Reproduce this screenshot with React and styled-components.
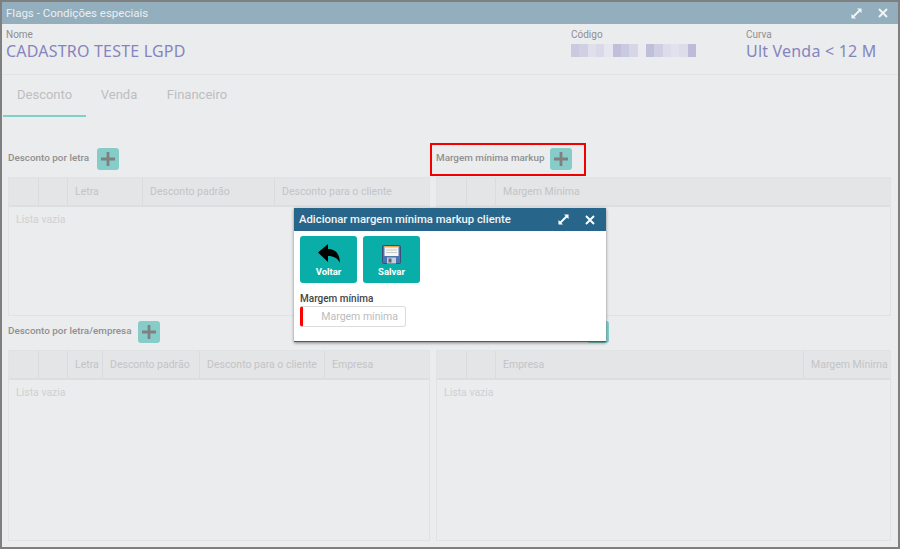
import React from 'react';
import styled, { createGlobalStyle } from 'styled-components';

const GlobalStyle = createGlobalStyle`
  html, body {
    margin: 0;
    padding: 0;
    width: 900px;
    height: 549px;
    overflow: hidden;
    background: #ebecee;
    font-family: Roboto, "Liberation Sans", sans-serif;
  }
  * { box-sizing: border-box; }
`;

const Page = styled.div`
  position: relative;
  width: 900px;
  height: 549px;
  border: 2px solid #7f7f7f;
  background: #ebecee;
  display: flex;
  flex-direction: column;
`;

const TitleBar = styled.div`
  height: 22px;
  flex: none;
  padding: 0 10px 0 4px;
  display: flex;
  align-items: center;
  justify-content: space-between;
  background: #93aebc;
  color: #ebeff2;
  font-size: 11.5px;
`;

const WindowActions = styled.div`
  display: flex;
  align-items: center;
  gap: ${({ $gap }) => $gap}px;
`;

const ClientInfo = styled.div`
  height: 51px;
  flex: none;
  padding: 5px 0 0 4px;
  border-bottom: 1px solid #e2e3e5;
  display: grid;
  grid-template-columns: 565px 175px 1fr;
`;

const FieldLabel = styled.div`
  font-size: 10px;
  line-height: 12px;
  color: #8f8f8f;
`;

const FieldValue = styled.div`
  font-family: "Noto Sans", sans-serif;
  font-size: 16px;
  line-height: 20px;
  letter-spacing: 0.2px;
  color: #8585bd;
  white-space: nowrap;
`;

const Mosaic = styled.div`
  display: flex;
  width: 125px;
  height: 13px;
  margin-top: 3px;
`;

const MosaicCell = styled.span`
  flex: 1;
  background: ${({ $tone }) => $tone};
`;

const TabRow = styled.div`
  height: 42px;
  flex: none;
  margin-left: 1px;
  display: flex;
  font-size: 13px;
  color: #bdbec0;
`;

const Tab = styled.div`
  padding: 12px 14px 0;
  width: ${({ $width }) => $width}px;
  text-align: center;
  white-space: nowrap;
  border-bottom: ${({ $active }) => ($active ? '2px solid #7fcfca' : 'none')};
`;

const Sections = styled.div`
  flex: 1;
  padding: 31px 7px 6px 6px;
  display: grid;
  grid-template-columns: 422px 455px;
  column-gap: 6px;
  row-gap: 5px;
  grid-template-rows: 168px 1fr;
`;

const Section = styled.section`
  display: flex;
  flex-direction: column;
  min-height: 0;
`;

const SectionHead = styled.div`
  height: 29px;
  flex: none;
  display: flex;
  align-items: flex-start;
  gap: ${({ $gap }) => $gap}px;
`;

const SectionTitle = styled.span`
  margin-top: 4px;
  font-size: 9.9px;
  font-weight: 500;
  line-height: 12px;
  color: #8f8f8f;
  white-space: nowrap;
`;

const AddButton = styled.div`
  width: 22px;
  height: 22px;
  border-radius: 3px;
  background: #86cdca;
  display: flex;
  align-items: center;
  justify-content: center;
`;

const Table = styled.div`
  flex: 1;
  border: 1px solid #e1e2e4;
  display: flex;
  flex-direction: column;
`;

const HeadRow = styled.div`
  height: 29px;
  flex: none;
  background: #e4e5e7;
  border-bottom: 2px solid #dddee0;
  display: grid;
  grid-template-columns: ${({ $cols }) => $cols};
`;

const HeadCell = styled.div`
  padding: 0 7px;
  border-right: 1px solid #dadbdd;
  font-size: 10.5px;
  line-height: 27px;
  color: #c3c4c6;
  white-space: nowrap;
  &:last-child { border-right: none; }
`;

const EmptyText = styled.div`
  padding: 6px 7px;
  font-size: 10.5px;
  line-height: 14px;
  color: #cfd0d2;
`;

// Red marker around the section heading
const Highlight = styled.div`
  position: absolute;
  left: 428px;
  top: 141px;
  width: 156px;
  height: 33px;
  border: 2px solid #f00000;
`;

const Dialog = styled.div`
  position: absolute;
  left: 292px;
  top: 206px;
  width: 312px;
  height: 134px;
  background: #fff;
  box-shadow: 0 1px 3px rgba(0, 0, 0, 0.45);
  border-bottom: 1px solid #2a6583;
`;

const DialogBar = styled.div`
  height: 23px;
  padding: 0 11px 0 5px;
  display: flex;
  align-items: center;
  justify-content: space-between;
  background: #27668a;
  color: #f2f5f7;
  font-size: 11.3px;
  font-weight: 500;
`;

const DialogBody = styled.div`
  padding: 5px 6px 0;
`;

const ButtonRow = styled.div`
  display: flex;
  gap: 6px;
`;

const ActionButton = styled.div`
  width: 57px;
  height: 47px;
  border-radius: 3px;
  background: #0aaea8;
  color: #fff;
  font-size: 9.5px;
  font-weight: 700;
  display: flex;
  flex-direction: column;
  align-items: center;
  padding-top: 8px;
`;

const ButtonIcon = styled.div`
  height: 20px;
  display: flex;
  align-items: center;
  justify-content: center;
  margin-bottom: 2px;
`;

const InputLabel = styled.div`
  margin-top: 10px;
  font-size: 10px;
  font-weight: 500;
  line-height: 12px;
  color: #444;
`;

const InputBox = styled.div`
  margin-top: 1px;
  width: 106px;
  height: 21px;
  border: 1px solid #dcdcdc;
  border-left: 3px solid #ff0000;
  border-radius: 3px;
  padding-right: 7px;
  text-align: right;
  font-size: 10.5px;
  line-height: 19px;
  color: #bcbcbc;
`;

const ExpandIcon = ({ color, size }) => (
  <svg width={size} height={size} viewBox="0 0 12 12" fill={color}>
    <path d="M6.5 0.5H11.5V5.5L9.7 3.7 3.7 9.7 5.5 11.5H0.5V6.5L2.3 8.3 8.3 2.3z" />
  </svg>
);

const CloseIcon = ({ color, size }) => (
  <svg width={size} height={size} viewBox="0 0 10 10" stroke={color} strokeWidth="1.9" fill="none">
    <path d="M1 1l8 8M9 1l-8 8" />
  </svg>
);

const PlusIcon = () => (
  <svg width="14" height="14" viewBox="0 0 14 14" fill="#808080">
    <path d="M5.6 0h2.8v5.6H14v2.8H8.4V14H5.6V8.4H0V5.6h5.6z" />
  </svg>
);

const BackIcon = () => (
  <svg width="22" height="20" viewBox="0 0 22 20" fill="#000">
    <path d="M0 8.500L10 0v5c7 0 11.500 4 12 14-2.500-5-6-7-12-7v6z" />
  </svg>
);

// Floppy disk with the orange-topped label
const SaveIcon = () => (
  <svg width="19" height="19" viewBox="0 0 19 19">
    <rect x="0.5" y="0.5" width="18" height="18" rx="1" fill="#4b74b4" stroke="#39507a" />
    <rect x="2.5" y="1" width="14" height="10" fill="#f6f6f6" />
    <rect x="2.5" y="1" width="14" height="1.4" fill="#f0a040" />
    <path d="M4 5h11M4 7.500h11" stroke="#c9c9c9" strokeWidth="1" />
    <rect x="5" y="12.500" width="9" height="6" fill="#c9ced6" />
    <rect x="6.500" y="13.500" width="3" height="4" fill="#5b6470" />
  </svg>
);

const mosaicTones = [
  '#c9c9e0', '#d0d0e4', '#e0e0ec', '#d9d9ea', '#e6e6f0', '#bfbfda', '#c9c9e0', '#d6d6e8',
  '#eaeaf0', '#bfbfda', '#cfcfe4', '#dcdcea', '#e2e2ee', '#dcdcea', '#bcbcd8',
];

const DISCOUNT_COLS = '30px 29px 75px 132px 1fr';
const MARKUP_COLS = '30px 29px 1fr';
const COMPANY_COLS = '30px 29px 35px 97px 125px 1fr';
const MARKUP_COMPANY_COLS = '30px 29px 308px 1fr';

const DataSection = ({ title, titleGap, cols, heads, hideEmpty }) => (
  <Section>
    <SectionHead $gap={titleGap}>
      <SectionTitle>{title}</SectionTitle>
      <AddButton><PlusIcon /></AddButton>
    </SectionHead>
    <Table>
      <HeadRow $cols={cols}>
        <HeadCell />
        <HeadCell />
        {heads.map((h) => <HeadCell key={h}>{h}</HeadCell>)}
      </HeadRow>
      {!hideEmpty && <EmptyText>Lista vazia</EmptyText>}
    </Table>
  </Section>
);

const App = () => (
  <>
    <GlobalStyle />
    <Page>
      <TitleBar>
        <span>Flags - Condições especiais</span>
        <WindowActions $gap={16}>
          <ExpandIcon color="#f2f5f7" size={11} />
          <CloseIcon color="#f2f5f7" size={10} />
        </WindowActions>
      </TitleBar>

      <ClientInfo>
        <div>
          <FieldLabel>Nome</FieldLabel>
          <FieldValue>CADASTRO TESTE LGPD</FieldValue>
        </div>
        <div>
          <FieldLabel>Código</FieldLabel>
          <Mosaic>
            {mosaicTones.map((tone, i) => <MosaicCell key={i} $tone={tone} />)}
          </Mosaic>
        </div>
        <div>
          <FieldLabel>Curva</FieldLabel>
          <FieldValue>Ult Venda &lt; 12 M</FieldValue>
        </div>
      </ClientInfo>

      <TabRow>
        <Tab $active $width={83}>Desconto</Tab>
        <Tab $width={66}>Venda</Tab>
        <Tab $width={90}>Financeiro</Tab>
      </TabRow>

      <Sections>
        <DataSection
          title="Desconto por letra"
          titleGap={8}
          cols={DISCOUNT_COLS}
          heads={['Letra', 'Desconto padrão', 'Desconto para o cliente']}
        />
        <DataSection
          title="Margem mínima markup"
          titleGap={5}
          cols={MARKUP_COLS}
          heads={['Margem Mínima']}
          hideEmpty
        />
        <DataSection
          title="Desconto por letra/empresa"
          titleGap={6}
          cols={COMPANY_COLS}
          heads={['Letra', 'Desconto padrão', 'Desconto para o cliente', 'Empresa']}
        />
        <DataSection
          title="Margem mínima markup/empresa"
          titleGap={0}
          cols={MARKUP_COMPANY_COLS}
          heads={['Empresa', 'Margem Mínima']}
        />
      </Sections>

      <Highlight />

      <Dialog>
        <DialogBar>
          <span>Adicionar margem mínima markup cliente</span>
          <WindowActions $gap={16}>
            <ExpandIcon color="#ffffff" size={11} />
            <CloseIcon color="#ffffff" size={10} />
          </WindowActions>
        </DialogBar>
        <DialogBody>
          <ButtonRow>
            <ActionButton>
              <ButtonIcon><BackIcon /></ButtonIcon>
              Voltar
            </ActionButton>
            <ActionButton>
              <ButtonIcon><SaveIcon /></ButtonIcon>
              Salvar
            </ActionButton>
          </ButtonRow>
          <InputLabel>Margem mínima</InputLabel>
          <InputBox>Margem mínima</InputBox>
        </DialogBody>
      </Dialog>
    </Page>
  </>
);

export default App;
